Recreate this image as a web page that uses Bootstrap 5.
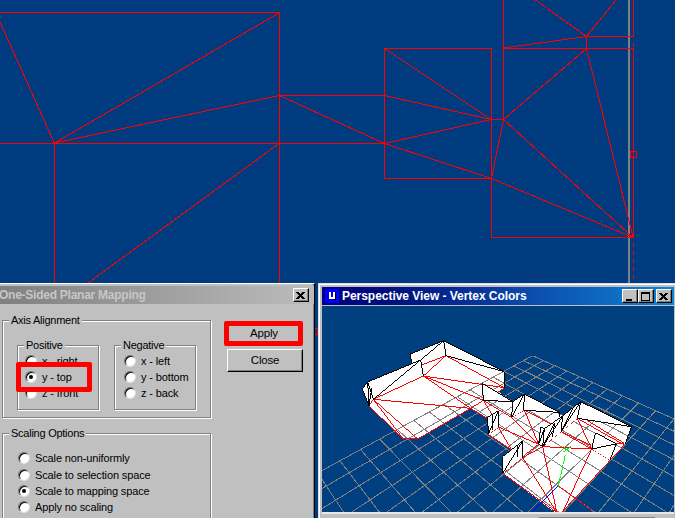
<!DOCTYPE html>
<html lang="en">
<head>
<meta charset="utf-8">
<title>One-Sided Planar Mapping</title>
<link href="https://cdn.jsdelivr.net/npm/bootstrap@5.3.0/dist/css/bootstrap.min.css" rel="stylesheet">
<style>
body{width:675px;height:518px;overflow:hidden;background:#003a7f;font:11px/16px "Liberation Sans",Arial,sans-serif;color:#000}
.desktop{width:675px;height:518px}
.plan{left:0;top:0}
svg{display:block;shape-rendering:crispEdges}
.win{background:#c0c0c0}
.mapping{left:-4px;top:283px;width:319px;height:240px;border-top:1px solid #fff;border-right:1px solid #000;padding:2px 4px 0 4px;box-shadow:inset -1px 0 #808080}
.view{left:318px;top:283px;width:360px;height:240px;border-top:1px solid #dfdfdf;border-left:1px solid #dfdfdf;padding:3px 4px 0 3px;box-shadow:inset 1px 1px #fff}
.tbar{height:18px;font-weight:700;white-space:nowrap}
.mapping .tbar{background:linear-gradient(90deg,#808080,#bcbcbc);color:#c6c6c6;width:314px}
.view .tbar{background:linear-gradient(90deg,#000080 0,#00107c 20%,#0c50b0 62%,#1084d0);color:#fff;padding:0 2px 0 3px;width:352px}
.tbar span{font-size:12px}
.mapping .tbar span{letter-spacing:-.25px;margin-left:-1px}
.view .tbar span{letter-spacing:-.04px;margin-left:3px}
.cap{width:16px;height:14px;padding:0;border:1px solid;border-color:#fff #000 #000 #fff;box-shadow:inset -1px -1px #808080;background:#c0c0c0}
.view .cap:last-child{margin-left:2px}
.mapping .cap{margin-right:5px}
.logo{width:14px;height:14px;background:#00f;border-radius:2px}
.grp{border:1px solid #808080;box-shadow:1px 1px #fff,inset 1px 1px #fff}
.grp>.cpt{display:block;width:max-content;background:#c0c0c0;line-height:14px;height:14px;margin:-8px 0 0 6px;padding:0 2px;letter-spacing:-.25px}
.axis{width:209px;height:98px;margin:0 0 0 2px}
.dir{width:82px;height:65px}
.dir label,.scal label{display:flex;align-items:center;height:16px;gap:5px;white-space:nowrap;letter-spacing:-.13px}
.dir .opts{padding:1px 0 0 7px}
.dir.first{margin:18px 0 0 14px}
.dir.second{margin:18px 0 0 15px}
.dir.second .opts{padding-left:9px}
.rad{width:12px;height:12px;border-radius:50%;background:#fff;border:1px solid;border-color:#707070 #dfdfdf #dfdfdf #707070;box-shadow:inset 1px 1px #000;flex:none;display:flex;align-items:center;justify-content:center}
.rad.on::after{content:"";width:4px;height:4px;border-radius:50%;background:#000}
.scal{width:209px;height:110px;margin:15px 0 0 2px}
.scal .opts{padding:10px 0 0 15px}
.scal label+label{position:relative;top:1px}
.btns{padding:17px 0 0 13px;gap:3px}
.pushb{width:76px;height:23px;margin-left:3px;border:1px solid;border-color:#fff #000 #000 #fff;box-shadow:inset -1px -1px #808080;background:#c0c0c0;border-radius:0;padding:0;font-size:11.5px;letter-spacing:-.2px;line-height:19px}
.applyb{width:79px;height:25px;border:5px solid #f00;border-radius:2px;background:#c0c0c0;padding:0 0 0 1px;font-size:11.5px;letter-spacing:-.2px;line-height:11px}
.ring{left:16px;top:362px;width:76px;height:30px;border:5px solid #f00;border-radius:2px}
.scene{margin-top:1px;background:#004080}
.foot{height:6px;border-top:2px solid #e8e8e8;width:352px}
</style>
</head>
<body>
<div class="desktop position-relative overflow-hidden">
<svg class="plan position-absolute" width="675" height="518">
<defs><pattern id="dots" width="4" height="4" patternUnits="userSpaceOnUse"><rect width="4" height="4" fill="#003a7f"/><rect x="1" y="1" width="1" height="1" fill="#084080"/></pattern></defs>
<rect width="675" height="518" fill="url(#dots)"/>
<path d="M629 0V284" stroke="#808080" stroke-width="2"/>
<g stroke="#f00" fill="none">
<path d="M0 12.5H279.5V284M0 22L54.5 143.5V284M54.5 143L279 13M54.5 143L279 95.5H384.5M279.5 95.5L384.5 143.5M0 143.5H384.5M279 143.5L88 283"/>
<path d="M384.5 48.5H491.5V237.5H633.5V48.5H503.5V0M384.5 48.5V178.5H491.5M384.5 48.5L491 119.5H503.5V48M384.5 95.5L491 119.5L384.5 143.5L491.5 178.5L633 237.5L503.5 119.5L586.5 48.5L633 237M503.5 119.5L491.5 178.5M503.5 48L586.5 36.5H633.5V0M586.5 36.5V48.5M535.5 0L586.5 36.5L616 0"/>
<path d="M633.5 43v4M633.5 243v4m0 4v4m0 4v4m0 4v4m0 4v4"/>
<rect x="630.5" y="151.5" width="6" height="6"/>
<path d="M314 328.5h3.500v6h-3"/>
</g>
</svg>

<div class="win mapping position-absolute">
 <div class="tbar d-flex align-items-center justify-content-between"><span>One-Sided Planar Mapping</span>
  <button class="cap"><svg width="13" height="11"><path d="M3 2l7 7M4 2l7 7M10 2l-7 7M11 2l-7 7" stroke="#000" transform="translate(-.5)"/></svg></button></div>
 <div class="d-flex">
  <div class="pt-3">
   <div class="grp axis"><span class="cpt">Axis Alignment</span>
    <div class="d-flex">
     <div class="grp dir first"><span class="cpt">Positive</span><div class="opts"><label><i class="rad"></i>x - right</label><label><i class="rad on"></i>y - top</label><label><i class="rad"></i>z - front</label></div></div>
     <div class="grp dir second"><span class="cpt">Negative</span><div class="opts"><label><i class="rad"></i>x - left</label><label><i class="rad"></i>y - bottom</label><label><i class="rad"></i>z - back</label></div></div>
    </div>
   </div>
   <div class="grp scal"><span class="cpt">Scaling Options</span><div class="opts"><label><i class="rad"></i>Scale non-uniformly</label><label><i class="rad"></i>Scale to selection space</label><label><i class="rad on"></i>Scale to mapping space</label><label><i class="rad"></i>Apply no scaling</label></div></div>
  </div>
  <div class="btns d-flex flex-column"><button class="applyb">Apply</button><button class="pushb">Close</button></div>
 </div>
</div>
<div class="ring position-absolute"></div>

<div class="win view position-absolute">
 <div class="tbar d-flex align-items-center">
  <svg class="logo" width="14" height="14"><path d="M5 3v5q0 2 2 2h2V3M10 3v8" fill="none" stroke="#000"/><path d="M5 3v5q0 1 1 1h3V3" fill="none" stroke="#fff" stroke-width="2"/></svg>
  <span class="flex-grow-1">Perspective View - Vertex Colors</span>
  <button class="cap"><svg width="13" height="11"><path d="M3 9h6" stroke="#000" stroke-width="2"/></svg></button>
  <button class="cap"><svg width="13" height="11"><path d="M2.500 1.500h8v8h-8zM2 2.500h9" stroke="#000" fill="none"/></svg></button>
  <button class="cap"><svg width="13" height="11"><path d="M3 2l7 7M4 2l7 7M10 2l-7 7M11 2l-7 7" stroke="#000" transform="translate(-.5)"/></svg></button>
 </div>
 <svg class="scene" width="352" height="206" viewBox="322 306 352 206">
  <g transform="translate(320 320) scale(.33333)" fill="#fff">
   <path d="M127 207L143 186L302 120L275 130L271 102L371 62L553 155V203L535 215L578 245L613 222L718 277L728 288L782 245L935 320L915 375L870 420L725 577H705L548 460L590 400L505 343L503 297L452 265L293 357H250L147 258Z"/>
  </g>
  <g id="grid" stroke="#808080" fill="none"></g>
  <g transform="translate(320 320) scale(.33333)" fill="none" stroke="#f00" stroke-width="3">
   <path d="M305 135L378 107L310 168L160 238L147 258L250 357H293L452 265L490 241M160 238L250 357M160 238L293 357M160 238L452 265L310 168L553 203L378 107M310 168L490 241L575 292L611 271M535 215L553 205M452 265L505 297M490 241L515 282M505 343L575 390M505 343L537 322L656 373L575 292M656 373L613 270L718 325M535 322L575 390M668 380L608 413L548 460L710 577L608 413M656 373L608 410M668 380L710 575M668 380L815 387L728 577M668 380L723 335L815 387L772 295L723 335L812 375M772 295L913 375L725 577M795 297L913 370M815 387L870 420M889 372H913M715 497L820 575"/>
   <path d="M715 497L637 575" stroke="#00f"/>
   <path d="M715 497L736 405" stroke="#0f0" stroke-dasharray="30 4"/>
   <path d="M728 378L750 396M752 380L730 396" stroke="#0f0"/>
  </g>
  <g transform="translate(320 320) scale(.33333)" fill="#fff" stroke="#000" stroke-width="3">
   <path d="M160 238L302 120L143 186L127 207L147 258L143 186L160 238M147 258L155 205M302 120L310 168M275 130L271 102L371 62L378 107L553 155V203M371 62L553 155M302 120L371 62" fill="none"/>
   <path d="M487 190L578 245L490 241ZM578 245L575 292L613 222ZM575 292L613 222L611 271M613 222L718 277L611 271M718 277V292"/>
   <path d="M505 343L503 292L535 272L536 322M505 343L535 272M516 285L518 330"/>
   <path d="M548 460V410L608 363V413M548 460L608 363M592 378V410"/>
   <path d="M656 373L662 322L673 326L668 380L656 373L673 326"/>
   <path d="M668 380L673 326L728 288L723 335M668 380L728 288M668 380L704 308L697 352"/>
   <path d="M723 335L728 288L782 245L772 295M723 335L782 245M723 335L757 268"/>
   <path d="M772 295L782 245L935 320ZM935 320L915 373"/>
   <path d="M815 387L827 338L889 372L870 420M815 387L889 372"/>
  </g>
 </svg>
 <div class="foot d-flex"><svg width="352" height="4"><path d="M217 3.500h116" stroke="#808080"/></svg></div>
</div>
</div>
<script>
// Ground plane: 16 x 16 cells projected into the perspective viewport.
function project(i,j){
  var w=1-.02564*i-.0254*j;
  return ((532.5-22.47*i-2.97*j)/w).toFixed(2)+' '+((355.7-4.31*i-4.32*j)/w).toFixed(2);
}
var d='';
for(var k=0;k<=16;k++){d+='M'+project(k,0)+'L'+project(k,16)+'M'+project(0,k)+'L'+project(16,k);}
document.getElementById('grid').innerHTML='<path d="'+d+'"/>';
</script>
<script src="https://cdn.jsdelivr.net/npm/bootstrap@5.3.0/dist/js/bootstrap.bundle.min.js"></script>
</body>
</html>
